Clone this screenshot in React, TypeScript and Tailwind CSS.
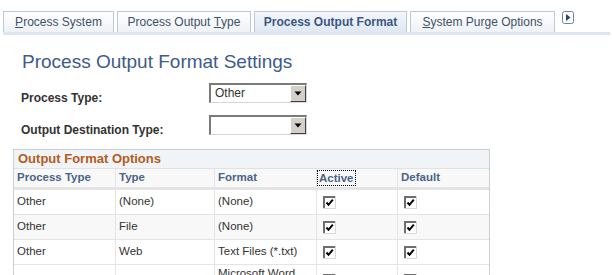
import React from "react";

const font = { fontFamily: '"Liberation Sans", Arial, sans-serif' };

function Tab({ label, u, active, w }: { label: string; u?: number; active?: boolean; w: string }) {
  const chars = label.split("");
  return (
    <div
      className={
        w +
        " h-[21px] flex items-center justify-center border-l border-t border-r border-[#bccad8] text-[12px] " +
        (active
          ? "bg-gradient-to-b from-[#f3f7fc] to-[#dfe8f3] text-[#3d5683] font-bold"
          : "bg-gradient-to-b from-[#ffffff] to-[#eef2f6] text-[#3f5067]")
      }
    >
      {chars.map((c, i) =>
        i === u ? (
          <span key={i} className="underline">
            {c}
          </span>
        ) : (
          <span key={i} className="whitespace-pre">
            {c}
          </span>
        )
      )}
    </div>
  );
}

function Select({ value }: { value: string }) {
  return (
    <div className="w-[98px] h-[20px] flex border-t-2 border-l-2 border-[#7a7a7a] border-r border-b border-r-[#d8d8d8] border-b-[#d8d8d8] bg-white">
      <div className="flex-1 text-[12px] text-[#333] pl-[4px] leading-[17px]">{value}</div>
      <div className="w-[16px] h-[17px] bg-[#d4d0c8] border-t border-l border-white border-r border-b border-r-[#404040] border-b-[#404040] flex items-center justify-center">
        <svg width="8" height="5" viewBox="0 0 8 5">
          <path d="M0.5 0.5 H7.5 L4 4.5 Z" fill="#000" />
        </svg>
      </div>
    </div>
  );
}

function Check() {
  return (
    <svg width="13" height="13" viewBox="0 0 13 13" className="block">
      <rect x="0" y="0" width="13" height="13" fill="#d8d8d8" />
      <rect x="0" y="0" width="12" height="12" fill="#6e6e6e" />
      <rect x="2" y="2" width="10" height="10" fill="#fff" />
      <path d="M3.5 6.5 L5.5 8.8 L9.8 3.6" stroke="#000" strokeWidth="2" fill="none" />
    </svg>
  );
}

const cols = "grid grid-cols-[102px_99px_102px_81px_91px]";

function Row({ a, b, c, shade, tall }: { a: string; b: string; c: string; shade?: boolean; tall?: boolean }) {
  const cell = "border-r border-[#e4e4e4] px-[3px] flex items-center";
  return (
    <div className={cols + " border-b border-[#e4e4e4] text-[11.5px] text-[#333] " + (shade ? "bg-[#f8f8f8]" : "bg-white") + (tall ? " h-[31px]" : " h-[25px]")}>
      <div className={cell}>{a}</div>
      <div className={cell}>{b}</div>
      <div className={cell + (tall ? " items-start pt-[2px] leading-[13px]" : "")}>{c}</div>
      <div className={cell + " pl-[6px]"}>
        <Check />
      </div>
      <div className="px-[6px] flex items-center">
        <Check />
      </div>
    </div>
  );
}

export default function App() {
  return (
    <div className="w-[612px] h-[275px] overflow-hidden bg-white" style={font}>
      <div className="pt-[11px] pl-[3px] pr-[2px]">
        <div className="flex items-end gap-[3px] border-b-[3px] border-[#dce6f2]">
          <Tab label="Process System" u={0} w="w-[111px]" />
          <Tab label="Process Output Type" u={15} w="w-[134px]" />
          <Tab label="Process Output Format" active w="w-[153px]" />
          <Tab label="System Purge Options" u={0} w="w-[145px]" />
          <div className="self-start ml-[4px] mt-[0px]">
            <svg width="12" height="13" viewBox="0 0 12 13">
              <rect x="0.5" y="0.5" width="11" height="12" rx="2" fill="#fff" stroke="#6d7fa8" />
              <path d="M4 3 L8.5 6.5 L4 10 Z" fill="#2f3f78" />
            </svg>
          </div>
        </div>
      </div>

      <div className="pl-[22px] pt-[16px] text-[19px] leading-[22px] text-[#3e5b8a]">Process Output Format Settings</div>

      <div className="mt-[10px] pl-[21px] flex items-start h-[20px]">
        <div className="w-[188px] text-[12px] leading-[14px] font-bold text-[#333] pt-[8px]">Process Type:</div>
        <Select value="Other" />
      </div>
      <div className="mt-[12px] pl-[21px] flex items-start h-[20px]">
        <div className="w-[188px] text-[12px] leading-[14px] font-bold text-[#333] pt-[8px]">Output Destination Type:</div>
        <Select value="" />
      </div>

      <div className="ml-[13px] mt-[14px] w-[477px] border-l border-r border-t border-[#c7d0d8]">
        <div className="h-[19px] bg-[#f0f4f6] border-b border-[#e2e2e2] text-[13px] font-bold text-[#b35c1e] pl-[4px] leading-[18px]">
          Output Format Options
        </div>
        <div className={cols + " h-[21px] bg-[#f8f8f8] border-b-[3px] border-[#e4e4e4] text-[11.5px] font-bold text-[#4a6488]"}>
          <div className="border-r border-[#e4e4e4] px-[3px] flex items-center">Process Type</div>
          <div className="border-r border-[#e4e4e4] px-[3px] flex items-center">Type</div>
          <div className="border-r border-[#e4e4e4] px-[3px] flex items-center">Format</div>
          <div className="border-r border-[#e4e4e4] px-[1px] flex items-center">
            <span className="outline outline-1 outline-dotted outline-black px-[1px] leading-[14px]">Active</span>
          </div>
          <div className="px-[3px] flex items-center">Default</div>
        </div>
        <Row a="Other" b="(None)" c="(None)" />
        <Row a="Other" b="File" c="(None)" shade />
        <Row a="Other" b="Web" c="Text Files (*.txt)" />
        <Row a="" b="" c="Microsoft Word (*.doc)" tall />
      </div>
    </div>
  );
}
